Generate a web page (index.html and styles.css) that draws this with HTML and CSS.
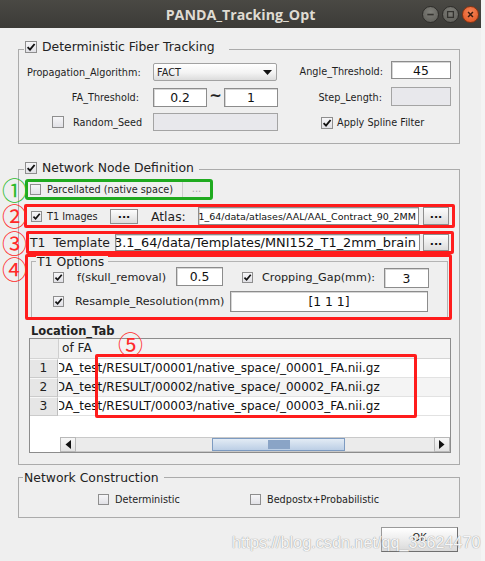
FILE: index.html
```html
<!DOCTYPE html>
<html>
<head>
<meta charset="utf-8">
<title>PANDA_Tracking_Opt</title>
<link rel="stylesheet" href="styles.css">
</head>
<body>
<div class="app">
  <header class="titlebar">
    <span class="tb-spacer"></span>
    <span class="title">PANDA_Tracking_Opt</span>
    <span class="wbtns">
      <span class="wb wb-min"><svg viewBox="0 0 16 16"><rect x="4.6" y="7.2" width="6.8" height="1.7" fill="#34332f"/></svg></span>
      <span class="wb wb-max"><svg viewBox="0 0 16 16"><rect x="4.9" y="4.9" width="6.2" height="6.2" fill="none" stroke="#34332f" stroke-width="1.4"/></svg></span>
      <span class="wb wb-close"><svg viewBox="0 0 16 16"><path d="M5.4 5.4L10.6 10.6M10.6 5.4L5.4 10.6" stroke="#3b1c0e" stroke-width="1.6"/></svg></span>
    </span>
  </header>

  <main class="content">
    <section class="group g1">
      <div class="gtitle gt1">
        <span class="cb on"><svg viewBox="0 0 10 10"><path d="M1.6 5.2L4 7.6L8.6 2" fill="none" stroke="#111" stroke-width="1.9"/></svg></span>
        <span class="gtext">Deterministic Fiber Tracking</span>
      </div>
      <div class="row r1">
        <span class="lbl lbl-prop">Propagation_Algorithm:</span>
        <div class="select"><span>FACT</span><svg class="caret" viewBox="0 0 9 5"><path d="M0 0H9L4.5 5Z" fill="#111"/></svg></div>
        <span class="lbl lbl-angle">Angle_Threshold:</span>
        <div class="field num angle">45</div>
      </div>
      <div class="row r2">
        <span class="lbl lbl-fa">FA_Threshold:</span>
        <div class="field num fa">0.2</div>
        <span class="tilde">~</span>
        <div class="field num fa">1</div>
        <span class="lbl lbl-step">Step_Length:</span>
        <div class="field disabled step"></div>
      </div>
      <div class="row r3">
        <span class="cb seed-cb"></span>
        <span class="lbl lbl-seed">Random_Seed</span>
        <div class="field disabled seed"></div>
        <span class="cb on spline-cb"><svg viewBox="0 0 10 10"><path d="M1.6 5.2L4 7.6L8.6 2" fill="none" stroke="#111" stroke-width="1.9"/></svg></span>
        <span class="lbl lbl-spline">Apply Spline Filter</span>
      </div>
    </section>

    <section class="group g2">
      <div class="gtitle gt2">
        <span class="cb on"><svg viewBox="0 0 10 10"><path d="M1.6 5.2L4 7.6L8.6 2" fill="none" stroke="#111" stroke-width="1.9"/></svg></span>
        <span class="gtext">Network Node Definition</span>
      </div>

      <div class="mark green-box">
        <span class="cb sm"></span>
        <span class="lbl lbl-parc">Parcellated (native space)</span>
        <span class="btn-dis">...</span>
      </div>

      <div class="mark red-box box2">
        <span class="cb sm on"><svg viewBox="0 0 10 10"><path d="M1.6 5.2L4 7.6L8.6 2" fill="none" stroke="#111" stroke-width="1.9"/></svg></span>
        <span class="lbl lbl-t1">T1 Images</span>
        <span class="btn btn-t1">...</span>
        <span class="lbl lbl-atlas">Atlas:</span>
        <div class="field path atlas"><span>1_64/data/atlases/AAL/AAL_Contract_90_2MM</span></div>
        <span class="btn btn-end">...</span>
      </div>

      <div class="mark red-box box3">
        <span class="lbl lbl-tpl">T1  Template</span>
        <div class="field path tpl"><span>PANDA_1.3.1_64/data/Templates/MNI152_T1_2mm_brain</span></div>
        <span class="btn btn-end3">...</span>
      </div>

      <div class="mark red-box box4">
        <div class="t1group">
          <div class="t1title">T1 Options</div>
          <div class="row t1r1">
            <span class="cb sm on t1cb"><svg viewBox="0 0 10 10"><path d="M1.6 5.2L4 7.6L8.6 2" fill="none" stroke="#111" stroke-width="1.9"/></svg></span>
            <span class="lbl mid lbl-skull">f(skull_removal)</span>
            <div class="field num skull">0.5</div>
            <span class="cb sm on crop-cb"><svg viewBox="0 0 10 10"><path d="M1.6 5.2L4 7.6L8.6 2" fill="none" stroke="#111" stroke-width="1.9"/></svg></span>
            <span class="lbl mid lbl-crop">Cropping_Gap(mm):</span>
            <div class="field num crop">3</div>
          </div>
          <div class="row t1r2">
            <span class="cb sm on t1cb"><svg viewBox="0 0 10 10"><path d="M1.6 5.2L4 7.6L8.6 2" fill="none" stroke="#111" stroke-width="1.9"/></svg></span>
            <span class="lbl mid lbl-res">Resample_Resolution(mm)</span>
            <div class="field num res">[1 1 1]</div>
          </div>
        </div>
      </div>

      <div class="loc">Location_Tab</div>
      <div class="table">
        <div class="thead"><span class="corner"></span><span class="th">of FA</span></div>
        <div class="tr"><span class="rh">1</span><span class="td"><span class="cutd">D</span>A_test/RESULT/00001/native_space/_00001_FA.nii.gz</span></div>
        <div class="tr alt"><span class="rh">2</span><span class="td"><span class="cutd">D</span>A_test/RESULT/00002/native_space/_00002_FA.nii.gz</span></div>
        <div class="tr"><span class="rh">3</span><span class="td"><span class="cutd">D</span>A_test/RESULT/00003/native_space/_00003_FA.nii.gz</span></div>
        <div class="filler"></div>
        <div class="hscroll">
          <span class="hs-blank"></span>
          <span class="hs-btn"><svg viewBox="0 0 6 9"><path d="M6 0V9L0.5 4.5Z" fill="#111"/></svg></span>
          <span class="hs-track"><span class="hs-thumb"><span class="grip"></span></span></span>
          <span class="hs-btn"><svg viewBox="0 0 6 9"><path d="M0 0V9L5.5 4.5Z" fill="#111"/></svg></span>
        </div>
      </div>
      <div class="mark red-box box5"></div>
    </section>

    <section class="group g3">
      <div class="gtitle gt3"><span class="gtext">Network Construction</span></div>
      <div class="row nc-row">
        <span class="cb sm nc-cb1"></span>
        <span class="lbl lbl-det">Deterministic</span>
        <span class="cb sm"></span>
        <span class="lbl lbl-bed">Bedpostx+Probabilistic</span>
      </div>
    </section>

    <div class="okrow"><span class="okbtn">OK</span></div>
  </main>
</div>

<span class="ann ann-green ann1">①</span>
<span class="ann ann-red ann2">②</span>
<span class="ann ann-red ann3">③</span>
<span class="ann ann-red ann4">④</span>
<span class="ann ann-red ann5">⑤</span>
<span class="watermark">https://blog.csdn.net/qq_33624470</span>
</body>
</html>
```

FILE: styles.css
```css
* { box-sizing: border-box; }

html, body { margin: 0; padding: 0; }

body {
  width: 485px;
  height: 561px;
  overflow: hidden;
  position: relative;
  background: #f4f4f4;
  font-family: "DejaVu Sans", sans-serif;
  color: #222;
}

.app {
  width: 481px;
  height: 561px;
  background: #efefef;
}

/* title bar */
.titlebar {
  height: 28px;
  background: linear-gradient(#4a4944, #3c3b37);
  display: grid;
  grid-template-columns: 1fr auto 1fr;
  align-items: center;
}
.title {
  font-family: "Open Sans", "DejaVu Sans", sans-serif;
  font-weight: 700;
  font-size: 14.2px;
  color: #dfdbd2;
}
.wbtns {
  justify-self: end;
  display: flex;
  gap: 3px;
  padding-right: 2px;
}
.wb {
  width: 17px;
  height: 17px;
  border-radius: 50%;
  display: flex;
  align-items: center;
  justify-content: center;
  border: 1px solid #2e2d2a;
}
.wb svg { width: 15px; height: 15px; }
.wb-min, .wb-max { background: radial-gradient(circle at 50% 35%, #80807a, #5b5a55); }
.wb-close { background: radial-gradient(circle at 50% 35%, #f6875a, #e0501c); border-color: #8a3411; }

/* generic */
.row { display: flex; align-items: center; }
.lbl { font-size: 9.7px; white-space: pre; color: #1e1e1e; }
.lbl.mid { font-size: 11.2px; }

.cb {
  flex: none;
  width: 12px;
  height: 12px;
  border: 1px solid #8e8e8e;
  background: linear-gradient(#f6f6f8, #e1e1e6);
  display: inline-flex;
  align-items: center;
  justify-content: center;
}
.cb.sm { width: 11px; height: 11px; }
.cb svg { width: 10px; height: 10px; }
.cb.sm svg { width: 9px; height: 9px; }

.field {
  flex: none;
  background: #fff;
  border: 1px solid #8c8c8c;
  box-shadow: inset 1px 1px 0 #d6d6d6;
  font-size: 12.4px;
  color: #111;
  display: flex;
  align-items: center;
  overflow: hidden;
  white-space: nowrap;
}
.field.num { justify-content: center; }
.field.disabled { background: #e8e8ec; border-color: #a4a4a4; box-shadow: none; }
.field.path { justify-content: flex-end; }
.field.path span { flex: none; }

.btn {
  flex: none;
  background: linear-gradient(#fdfdfd, #dcdcdc);
  border: 1px solid #8e8e8e;
  font-weight: 700;
  font-size: 11px;
  display: flex;
  align-items: center;
  justify-content: center;
  line-height: 1;
  padding-bottom: 3px;
  color: #111;
}

/* group boxes */
.group {
  margin-left: 18px;
  width: 442px;
  border: 1px solid #ababab;
}
.gtitle {
  display: flex;
  align-items: center;
  width: fit-content;
  height: 15px;
  margin-top: -8px;
  background: #efefef;
}
.gtext { font-size: 12.4px; white-space: nowrap; }
.gtitle .cb { margin-right: 5px; }

.g1 { margin-top: 21px; height: 95px; }
.gt1 { margin-left: 5px; padding: 0 14px 0 1px; margin-top: -11px; }

.r1 { margin-top: 7px; height: 20px; }
.lbl-prop { width: 134px; padding-left: 8px; margin-top: 2px; }
.select {
  flex: none;
  width: 124px;
  height: 18px;
  align-self: flex-end;
  border: 1px solid #a2a2a2;
  border-radius: 2px;
  background: linear-gradient(#ffffff, #f3f3f3 55%, #dcdcdc);
  display: flex;
  align-items: center;
  justify-content: space-between;
  padding: 0 3px 0 3px;
  font-size: 9.7px;
}
.caret { width: 9px; height: 5px; margin-right: 1px; margin-top: 1px; }
.lbl-angle { width: 106px; text-align: right; }
.angle { width: 60px; height: 18px; margin-left: 8px; align-self: flex-start; }

.r2 { margin-top: 6px; height: 20px; }
.lbl-fa { width: 134px; text-align: right; padding-right: 14px; }
.fa { width: 54px; height: 19px; align-self: flex-end; }
.tilde { width: 17px; text-align: center; font-weight: 700; font-size: 15px; margin-top: -3px; }
.lbl-step { width: 104px; text-align: right; }
.step { width: 60px; height: 19px; margin-left: 9px; align-self: flex-start; }

.r3 { margin-top: 6px; height: 18px; }
.seed-cb { margin-left: 33px; }
.lbl-seed { margin-left: 9px; width: 80px; }
.seed { width: 125px; height: 18px; }
.spline-cb { margin-left: 43px; align-self: flex-end; margin-bottom: 2px; }
.lbl-spline { margin-left: 4px; align-self: flex-end; line-height: 14px; margin-bottom: 1px; }

.g2 { margin-top: 25px; height: 296px; }
.gt2 { margin-left: 5px; padding: 0 5px 0 1px; margin-top: -10px; }

.mark { display: flex; align-items: center; border: 3px solid #ff1c1c; border-radius: 2px; }
.green-box {
  margin: 4px 0 0 6px;
  width: 188px;
  height: 21px;
  border-color: #1faa1f;
  border-radius: 3px;
}
.green-box .cb { margin-left: 2px; }
.lbl-parc { margin-left: 6px; }
.btn-dis {
  margin-left: auto;
  width: 28px;
  align-self: stretch;
  border-left: 1px solid #cdcdcd;
  background: #ececec;
  color: #ababab;
  font-size: 10px;
  display: flex;
  align-items: center;
  justify-content: center;
  padding-bottom: 3px;
}

.box2 { margin: 4px 0 0 5px; width: 431px; height: 24px; }
.box2 .cb { margin-left: 4px; }
.lbl-t1 { margin-left: 5px; width: 63px; }
.btn-t1 { width: 28px; height: 15px; }
.lbl-atlas { margin-left: 13px; width: 47px; font-size: 12.4px; }
.atlas { width: 221px; height: 18px; font-size: 9.5px; padding-right: 2px; }
.btn-end { margin-left: 4px; width: 26px; height: 18px; }

.box3 { margin: 3px 0 0 7px; width: 428px; height: 23px; }
.lbl-tpl { width: 86px; padding-left: 1px; font-size: 12.4px; }
.tpl { width: 305px; height: 17px; padding-right: 3px; font-size: 12.9px; }
.btn-end3 { margin-left: 3px; width: 26px; height: 17px; }

.box4 { display: block; margin: 0 0 0 6px; width: 427px; height: 66px; }
.t1group {
  margin: 4px 0 0 3px;
  width: 417px;
  height: 56px;
  border: 1px solid #b4b4b4;
  border-bottom: none;
}
.t1title {
  width: fit-content;
  margin: -6px 0 0 4px;
  padding: 0 4px 0 1px;
  line-height: 11px;
  font-size: 12.4px;
  background: #efefef;
}
.t1r1 { height: 21px; }
.t1cb { margin-left: 21px; }
.lbl-skull { margin-left: 13px; width: 99px; }
.skull { width: 47px; height: 19px; align-self: flex-start; }
.crop-cb { margin-left: 19px; }
.lbl-crop { margin-left: 9px; width: 122px; }
.crop { width: 45px; height: 20px; align-self: flex-end; }
.t1r2 { margin-top: 3px; height: 21px; }
.lbl-res { margin-left: 11px; width: 155px; }
.res { width: 198px; height: 21px; }

.loc {
  margin: 4px 0 0 12px;
  height: 14px;
  line-height: 14px;
  font-size: 11.5px;
  font-weight: 700;
}

.table {
  margin-left: 10px;
  width: 422px;
  height: 115px;
  border: 1px solid #8c8c8c;
  background: #fff;
  display: flex;
  flex-direction: column;
}
.thead { display: flex; height: 20px; flex: none; background: #f3f3f3; border-bottom: 1px solid #d4d4d4; }
.corner { width: 29px; border-right: 1px solid #cfcfcf; background: #ececec; }
.th { padding-left: 3px; font-size: 12.2px; line-height: 19px; }
.tr { display: flex; height: 19px; flex: none; }
.rh {
  width: 28px;
  background: #e6e6e6;
  border-right: 1px solid #bdbdbd;
  border-bottom: 1px solid #cbcbcb;
  border-top: 1px solid #f7f7f7;
  text-align: center;
  font-size: 12.2px;
  line-height: 17px;
}
.td {
  flex: 1;
  overflow: hidden;
  white-space: nowrap;
  border-bottom: 1px solid #e2e2e2;
  font-size: 12px;
  line-height: 18px;
  color: #111;
  display: flex;
}
.cutd {
  width: 6px;
  overflow: hidden;
  display: flex;
  justify-content: flex-end;
  margin-left: 1px;
}
.tr.alt .td { background: #f4f4f4; }
.filler { flex: 1; }
.hscroll { display: flex; height: 15px; flex: none; }
.hs-blank { width: 30px; }
.hs-btn {
  width: 16px;
  background: linear-gradient(#f7f7f7, #e2e2e2);
  border: 1px solid #b8b8b8;
  display: flex;
  align-items: center;
  justify-content: center;
}
.hs-btn svg { width: 6px; height: 9px; }
.hs-track {
  flex: 1;
  background: #ebebeb;
  border-top: 1px solid #c9c9c9;
  border-bottom: 1px solid #c9c9c9;
  display: flex;
}
.hs-thumb {
  margin-left: 136px;
  width: 133px;
  background: linear-gradient(#e3ebf5, #bccfe5);
  border: 1px solid #7d9bc1;
  display: flex;
  align-items: center;
  justify-content: center;
}
.grip {
  width: 22px;
  height: 9px;
  background-image: radial-gradient(circle, #8aa4c6 0.75px, transparent 0.9px);
  background-size: 2px 2px;
}

.box5 {
  position: absolute;
  left: 95px;
  top: 354px;
  width: 322px;
  height: 64px;
}

.g3 { margin-top: 12px; height: 41px; }
.gt3 { margin-left: 4px; padding: 0 5px 0 1px; }
.nc-row { margin-top: 5px; height: 18px; }
.nc-cb1 { margin-left: 79px; }
.lbl-det { margin-left: 6px; width: 135px; }
.lbl-bed { margin-left: 6px; }

.okrow { display: flex; justify-content: flex-end; padding-right: 23px; margin-top: 9px; }
.okbtn {
  width: 77px;
  height: 25px;
  background: linear-gradient(#ffffff, #e9e9e9 60%, #d9d9d9);
  border: 1px solid #9a9a9a;
  border-right-color: #6f6f6f;
  border-bottom-color: #6f6f6f;
  font-size: 9.7px;
  display: flex;
  align-items: center;
  justify-content: center;
  padding-bottom: 4px;
}

/* annotations (overlay) */
.ann {
  position: absolute;
  font-family: "Noto Sans CJK SC", sans-serif;
  font-size: 25px;
  line-height: 1;
}
.ann-green { color: #2cbb2c; }
.ann-red { color: #ff2a2a; }
.ann1 { left: 2px; top: 177px; }
.ann2 { left: 2px; top: 203px; }
.ann3 { left: 2px; top: 230px; }
.ann4 { left: 2px; top: 256px; }
.ann5 { left: 118px; top: 331px; }

.watermark {
  position: absolute;
  left: 232px;
  top: 533px;
  font-family: "Liberation Sans", sans-serif;
  font-size: 16.2px;
  color: rgba(255, 255, 255, 0.92);
  text-shadow: 0 0 1px #9a9a9a, 0 0 1px #b0b0b0;
  white-space: nowrap;
}
```
